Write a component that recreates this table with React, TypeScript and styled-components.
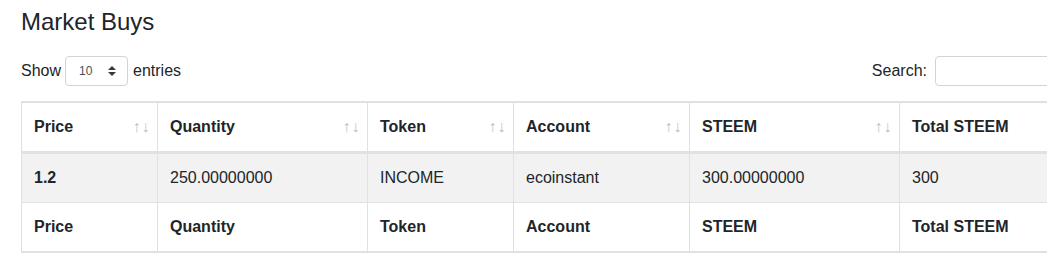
import React from "react";
import styled, { createGlobalStyle } from "styled-components";

const GlobalStyle = createGlobalStyle`
  *, *::before, *::after { box-sizing: border-box; }
  html, body { margin: 0; padding: 0; overflow: hidden; }
  body {
    font-family: "Liberation Sans", Arial, Helvetica, sans-serif;
    font-size: 16px;
    line-height: 1.5;
    color: #212529;
    background: #fff;
  }
`;

const Page = styled.div`
  padding: 8px 0 0 21px;
  width: 1100px;
`;

const Title = styled.h4`
  margin: 0 0 19px;
  font-size: 24px;
  font-weight: 500;
  line-height: 1.2;
  color: #212529;
`;

const Controls = styled.div`
  display: flex;
  justify-content: space-between;
  align-items: center;
  height: 30px;
  margin-bottom: 15px;
`;

const Label = styled.label`
  display: flex;
  align-items: center;
  font-weight: 400;
  white-space: nowrap;
`;

const SelectBox = styled.span`
  position: relative;
  display: inline-flex;
  margin: 0 5px 0 4px;
`;

const Select = styled.select`
  appearance: none;
  -webkit-appearance: none;
  width: 63px;
  height: 30px;
  padding: 0 20px 0 13px;
  font-family: inherit;
  font-size: 12px;
  color: #495057;
  background: #fff;
  border: 1px solid #ced4da;
  border-radius: 4px;
  outline: none;
`;

const Caret = styled.svg`
  position: absolute;
  right: 12px;
  top: 10px;
  pointer-events: none;
`;

const SearchInput = styled.input`
  width: 165px;
  height: 30px;
  margin-left: 8px;
  padding: 4px 8px;
  font-family: inherit;
  font-size: 14px;
  border: 1px solid #ced4da;
  border-radius: 4px;
  outline: none;
`;

const Table = styled.table`
  width: 100%;
  table-layout: fixed;
  border-collapse: separate;
  border-spacing: 0;
  border: 1px solid #dee2e6;
  color: #212529;
`;

const Col = styled.col<{ $w: number }>`
  width: ${(p) => p.$w}px;
`;

const HeadCell = styled.th<{ $sortable?: boolean }>`
  padding: 12px ${(p) => (p.$sortable ? "7px" : "12px")} 12px 12px;
  text-align: left;
  font-weight: 700;
  vertical-align: middle;
  border-top: 1px solid #dee2e6;
  border-right: 1px solid #dee2e6;
  border-bottom: 2px solid #dee2e6;
  white-space: nowrap;
  &:last-child { border-right-width: 0; }
`;

const HeadInner = styled.div`
  display: flex;
  justify-content: space-between;
  align-items: center;
`;

const SortArrows = styled.span`
  display: flex;
  font-size: 16px;
  font-weight: 400;
  line-height: 1;
  color: #212529;
  opacity: 0.3;
`;

const Arrow = styled.span`
  display: inline-block;
  width: 9px;
  text-align: center;
`;

const Row = styled.tr<{ $striped?: boolean }>`
  background: ${(p) => (p.$striped ? "#f2f2f2" : "transparent")};
`;

const BodyCell = styled.td<{ $bold?: boolean }>`
  padding: 12px;
  font-weight: ${(p) => (p.$bold ? 700 : 400)};
  border-top: 1px solid #dee2e6;
  border-right: 1px solid #dee2e6;
  white-space: nowrap;
  &:last-child { border-right-width: 0; }
`;

const FootCell = styled.th`
  padding: 12px;
  text-align: left;
  font-weight: 700;
  border-top: 1px solid #dee2e6;
  border-right: 1px solid #dee2e6;
  border-bottom: 1px solid #dee2e6;
  white-space: nowrap;
  &:last-child { border-right-width: 0; }
`;

const columns = [
  { name: "Price", width: 136, sortable: true },
  { name: "Quantity", width: 210, sortable: true },
  { name: "Token", width: 146, sortable: true },
  { name: "Account", width: 176, sortable: true },
  { name: "STEEM", width: 210, sortable: true },
  { name: "Total STEEM", width: 200, sortable: false },
];

const rows = [["1.2", "250.00000000", "INCOME", "ecoinstant", "300.00000000", "300"]];

export default function App() {
  return (
    <>
      <GlobalStyle />
      <Page>
        <Title>Market Buys</Title>
        <Controls>
          <Label>
            Show
            <SelectBox>
              <Select defaultValue="10">
                <option value="10">10</option>
                <option value="25">25</option>
                <option value="50">50</option>
                <option value="100">100</option>
              </Select>
              <Caret width="8" height="10" viewBox="0 0 4 5">
                <path fill="#343a40" d="M2 0L0 2h4zm0 5L0 3h4z" />
              </Caret>
            </SelectBox>
            entries
          </Label>
          <Label>
            Search:
            <SearchInput type="search" />
          </Label>
        </Controls>
        <Table>
          <colgroup>
            {columns.map((c) => (
              <Col key={c.name} $w={c.width} />
            ))}
          </colgroup>
          <thead>
            <tr>
              {columns.map((c) => (
                <HeadCell key={c.name} $sortable={c.sortable}>
                  <HeadInner>
                    <span>{c.name}</span>
                    {c.sortable && (
                      <SortArrows>
                        <Arrow>↑</Arrow>
                        <Arrow>↓</Arrow>
                      </SortArrows>
                    )}
                  </HeadInner>
                </HeadCell>
              ))}
            </tr>
          </thead>
          <tbody>
            {rows.map((r, i) => (
              <Row key={i} $striped={i % 2 === 0}>
                {r.map((v, j) => (
                  <BodyCell key={j} $bold={j === 0}>
                    {v}
                  </BodyCell>
                ))}
              </Row>
            ))}
          </tbody>
          <tfoot>
            <tr>
              {columns.map((c) => (
                <FootCell key={c.name}>{c.name}</FootCell>
              ))}
            </tr>
          </tfoot>
        </Table>
      </Page>
    </>
  );
}
